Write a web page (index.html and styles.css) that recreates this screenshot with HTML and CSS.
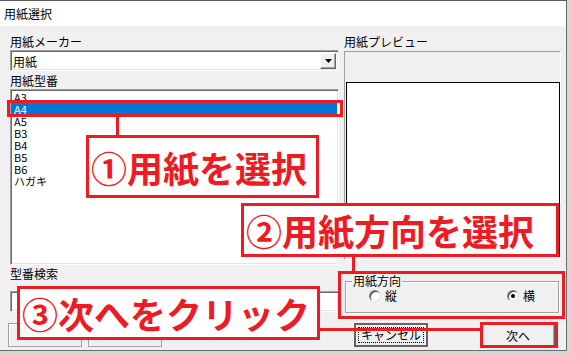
FILE: index.html
```html
<!DOCTYPE html>
<html lang="ja">
<head>
    <meta charset="UTF-8">
    <title>用紙選択</title>
    <link rel="stylesheet" href="styles.css">
</head>
<body>
    <div class="window">
        <div class="titlebar">用紙選択</div>
        <div class="client">
            <div class="main">
                <div class="col-left">
                    <div class="label">用紙メーカー</div>
                    <div class="combo">
                        <span class="combo-text">用紙</span>
                        <span class="combo-btn">
                            <svg width="7" height="4" viewBox="0 0 7 4"><path d="M0 0h7L3.5 4z" fill="#000"/></svg>
                        </span>
                    </div>
                    <div class="label list-label">用紙型番</div>
                    <ul class="listbox">
                        <li>A3</li>
                        <li class="selected">A4</li>
                        <li>A5</li>
                        <li>B3</li>
                        <li>B4</li>
                        <li>B5</li>
                        <li>B6</li>
                        <li>ハガキ</li>
                    </ul>
                    <div class="label search-label">型番検索</div>
                    <div class="textbox"></div>
                </div>

                <div class="col-right">
                    <div class="label">用紙プレビュー</div>
                    <div class="preview">
                        <div class="paper"></div>
                    </div>
                    <fieldset class="orient">
                        <legend>用紙方向</legend>
                        <div class="radios">
                            <label class="radio"><span class="radio-dot"></span>縦</label>
                            <label class="radio"><span class="radio-dot checked"></span>横</label>
                        </div>
                    </fieldset>
                </div>
            </div>

            <div class="buttons">
                <button class="btn"></button>
                <button class="btn btn-second"></button>
                <button class="btn btn-cancel"><span class="focus">キャンセル</span></button>
                <button class="btn btn-next">次へ</button>
            </div>
        </div>
    </div>

    <!-- 説明用の注記 -->
    <div class="mark mark-a4"></div>
    <div class="line line-1"></div>
    <div class="callout callout-1">①用紙を選択</div>

    <div class="callout callout-2">②用紙方向を選択</div>
    <div class="line line-2"></div>
    <div class="mark mark-orient"></div>

    <div class="callout callout-3">③次へをクリック</div>
    <div class="line line-3"></div>
    <div class="mark mark-next"></div>
</body>
</html>
```

FILE: styles.css
```css
* {
    margin: 0;
    padding: 0;
    box-sizing: border-box;
}

body {
    position: relative;
    width: 571px;
    height: 355px;
    overflow: hidden;
    background: #d6d6d6;
    font-family: "Noto Sans CJK JP", sans-serif;
    font-size: 12px;
    color: #000;
}

.window {
    width: 567px;
    height: 351px;
    border-top: 1px solid #5a5a5a;
    border-right: 1px solid #6b6b6b;
    border-bottom: 1px solid #6b6b6b;
    background: #f0f0f0;
    display: flex;
    flex-direction: column;
}

.titlebar {
    height: 25px;
    line-height: 25px;
    padding-left: 4px;
    background: #fff;
}

.client {
    flex: 1;
    padding: 7px 0 0 10px;
}

.main {
    display: flex;
    gap: 5px;
}

.col-left {
    width: 329px;
    display: flex;
    flex-direction: column;
}

.label {
    height: 17px;
    line-height: 17px;
}

.list-label {
    height: 18px;
    line-height: 20px;
}

.search-label {
    height: 26px;
    line-height: 18px;
}

.combo,
.listbox,
.textbox {
    background: #fff;
    border: 1px solid;
    border-color: #a0a0a0 #fff #fff #a0a0a0;
    box-shadow: inset 1px 1px 0 #696969, inset -1px -1px 0 #e3e3e3;
}

.combo {
    height: 21px;
    display: flex;
    align-items: center;
    justify-content: space-between;
    padding: 1px 2px 0 2px;
}

.combo-btn {
    width: 16px;
    height: 16px;
    display: flex;
    align-items: center;
    justify-content: center;
    background: #f0f0f0;
    border: 1px solid;
    border-color: #fff #696969 #696969 #fff;
    box-shadow: inset -1px -1px 0 #a0a0a0;
    margin-top: -1px;
}

.listbox {
    height: 176px;
    list-style: none;
    padding: 1px 1px 0 1px;
    font-size: 11px;
}

.listbox li {
    height: 12px;
    line-height: 12px;
    padding-left: 2px;
}

.listbox li.selected {
    background: #0078d7;
    color: #fff;
}

.textbox {
    height: 21px;
}

.col-right {
    width: 217px;
    display: flex;
    flex-direction: column;
}

.preview {
    height: 209px;
    margin-top: 1px;
    border: 1px solid;
    border-color: #a0a0a0 #fff #fff #a0a0a0;
    padding: 30px 0 0 1px;
}

.paper {
    width: 214px;
    height: 175px;
    background: #fff;
    border: 1px solid #000;
}

.orient {
    height: 38px;
    margin: 15px 2px 0 1px;
    padding: 0 6px 4px 6px;
    border: 1px solid #a0a0a0;
    box-shadow: inset 1px 1px 0 #fff, 1px 1px 0 #fff;
}

.orient legend {
    padding: 0 1px;
    line-height: 12px;
}

.radios {
    display: flex;
    justify-content: space-between;
    align-items: center;
    height: 100%;
    padding: 0 17px;
}

.radio {
    display: flex;
    align-items: center;
    gap: 4px;
}

.radio-dot {
    width: 12px;
    height: 12px;
    border-radius: 50%;
    background: #fff;
    border: 1px solid;
    border-color: #808080 #e3e3e3 #e3e3e3 #808080;
    box-shadow: inset 1px 1px 0 #404040;
    display: flex;
    align-items: center;
    justify-content: center;
}

.radio-dot.checked::after {
    content: "";
    width: 4px;
    height: 4px;
    border-radius: 50%;
    background: #000;
}

.buttons {
    display: flex;
    margin: 10px 0 0 -2px;
}

.btn {
    width: 74px;
    height: 24px;
    font-family: inherit;
    font-size: 12px;
    color: #000;
    background: #f0f0f0;
    border: 1px solid #a0a0a0;
    box-shadow: inset 1px 1px 0 #fff;
}

.btn-second {
    margin-left: 6px;
}

.btn-cancel {
    margin-left: 192px;
    border: 2px solid #646464;
    box-shadow: none;
    padding: 2px;
}

.btn-cancel .focus {
    display: block;
    height: 100%;
    line-height: 14px;
    border: 1px dotted #000;
}

.btn-next {
    margin-left: 53px;
    border-color: #fff #696969 #696969 #fff;
    box-shadow: inset -1px -1px 0 #a0a0a0;
}

/* 注記 */
.mark,
.line,
.callout {
    position: absolute;
}

.mark {
    border: 3px solid #ec1c24;
}

.line {
    background: #ec1c24;
}

.callout {
    background: #fff;
    border: 3px solid #ec1c24;
    color: #ec1c24;
    font-size: 36px;
    font-weight: bold;
    line-height: 1;
    white-space: nowrap;
    display: flex;
    align-items: center;
    padding-left: 2px;
}

.mark-a4 {
    left: 7px;
    top: 100px;
    width: 336px;
    height: 17px;
}

.line-1 {
    left: 116px;
    top: 116px;
    width: 3px;
    height: 20px;
}

.callout-1 {
    left: 86px;
    top: 135px;
    width: 233px;
    height: 63px;
}

.callout-2 {
    left: 241px;
    top: 203px;
    width: 318px;
    height: 54px;
}

.line-2 {
    left: 352px;
    top: 256px;
    width: 3px;
    height: 16px;
}

.mark-orient {
    left: 338px;
    top: 271px;
    width: 227px;
    height: 48px;
}

.callout-3 {
    left: 17px;
    top: 286px;
    width: 303px;
    height: 54px;
}

.line-3 {
    left: 319px;
    top: 328px;
    width: 162px;
    height: 3px;
}

.mark-next {
    left: 480px;
    top: 322px;
    width: 78px;
    height: 26px;
}
```
